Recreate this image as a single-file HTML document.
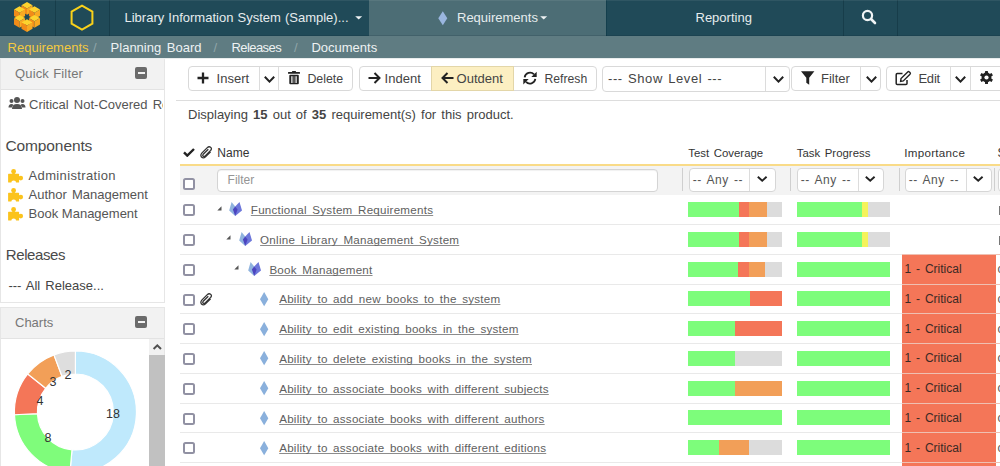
<!DOCTYPE html>
<html><head><meta charset="utf-8">
<style>
*{box-sizing:border-box;margin:0;padding:0}
html,body{width:1000px;height:466px;overflow:hidden;background:#fff;font-family:"Liberation Sans",sans-serif;color:#333}
.a{position:absolute}
.t{position:absolute;white-space:pre;line-height:1}
.vd{position:absolute;top:0;width:1px;height:36px;background:#173d4a}
.cb{position:absolute;width:12px;height:12px;border:2px solid #9191a3;border-radius:2.5px;background:#fff}
.btn{position:absolute;border:1px solid #d9d9d9;border-radius:4px;background:#fff}
.sep{position:absolute;width:1px;background:#d9d9d9}
u{text-decoration:underline;text-decoration-color:#8c8c8c;text-underline-offset:1.2px;text-decoration-skip-ink:none}
</style></head>
<body>

<div class="a" style="left:0;top:0;width:1000px;height:36px;background:#204a58"></div>
<svg class="a" style="left:0;top:0" width="55" height="36"><polygon points="27.00,2.00 32.54,5.20 27.00,8.40 21.46,5.20" fill="#fdd32e"/><polygon points="21.46,5.20 27.00,8.40 27.00,14.80 21.46,11.60" fill="#f28c18"/><polygon points="32.54,5.20 32.54,11.60 27.00,14.80 27.00,8.40" fill="#f8aa22"/><polygon points="19.55,6.30 25.09,9.50 19.55,12.70 14.01,9.50" fill="#fdd32e"/><polygon points="14.01,9.50 19.55,12.70 19.55,19.10 14.01,15.90" fill="#f28c18"/><polygon points="25.09,9.50 25.09,15.90 19.55,19.10 19.55,12.70" fill="#f8aa22"/><polygon points="34.45,6.30 39.99,9.50 34.45,12.70 28.91,9.50" fill="#fdd32e"/><polygon points="28.91,9.50 34.45,12.70 34.45,19.10 28.91,15.90" fill="#f28c18"/><polygon points="39.99,9.50 39.99,15.90 34.45,19.10 34.45,12.70" fill="#f8aa22"/><polygon points="19.55,14.90 25.09,18.10 19.55,21.30 14.01,18.10" fill="#fdd32e"/><polygon points="14.01,18.10 19.55,21.30 19.55,27.70 14.01,24.50" fill="#f28c18"/><polygon points="25.09,18.10 25.09,24.50 19.55,27.70 19.55,21.30" fill="#f8aa22"/><polygon points="34.45,14.90 39.99,18.10 34.45,21.30 28.91,18.10" fill="#fdd32e"/><polygon points="28.91,18.10 34.45,21.30 34.45,27.70 28.91,24.50" fill="#f28c18"/><polygon points="39.99,18.10 39.99,24.50 34.45,27.70 34.45,21.30" fill="#f8aa22"/><polygon points="27.00,19.20 32.54,22.40 27.00,25.60 21.46,22.40" fill="#fdd32e"/><polygon points="21.46,22.40 27.00,25.60 27.00,32.00 21.46,28.80" fill="#f28c18"/><polygon points="32.54,22.40 32.54,28.80 27.00,32.00 27.00,25.60" fill="#f8aa22"/></svg>
<div class="vd" style="left:55px"></div>
<svg class="a" style="left:56px;top:0" width="53" height="36" viewBox="56 0 53 36"><polygon points="82,5.6 92.4,11.6 92.4,23.6 82,29.6 71.6,23.6 71.6,11.6" fill="none" stroke="#f9d11a" stroke-width="2"/></svg>
<div class="vd" style="left:109px"></div>
<div class="t" style="left:124.5px;top:11.00px;font-size:13px;color:#e6ecee;word-spacing:0.5px">Library Information System (Sample)...</div>
<svg class="a" style="left:354.5px;top:15.8px" width="8" height="5"><path d="M0.2 0.2 L7.2 0.2 L3.7 3.6 Z" fill="#eef2f3"/></svg>
<div class="a" style="left:369px;top:0;width:237px;height:36px;background:#4c6d75"></div>
<div class="vd" style="left:606px;background:#143f4d"></div>
<svg class="a" style="left:438px;top:11px" width="10" height="15" viewBox="0 0 10 15"><path d="M4.8 0.2 L9.3 7.2 L4.8 14.2 L0.3 7.2 Z" fill="#9ab6df"/></svg>
<div class="t" style="left:457px;top:11.00px;font-size:13px;color:#e6ecee;">Requirements</div>
<svg class="a" style="left:540.3px;top:15.8px" width="8" height="5"><path d="M0.2 0.2 L7.2 0.2 L3.7 3.6 Z" fill="#eef2f3"/></svg>
<div class="t" style="left:695.5px;top:11.00px;font-size:13px;color:#e6ecee;">Reporting</div>
<div class="vd" style="left:843px"></div>
<svg class="a" style="left:861px;top:9px" width="16" height="16" viewBox="0 0 16 16"><circle cx="6.5" cy="6.5" r="4.6" fill="none" stroke="#f0f4f5" stroke-width="2.2"/><path d="M10 10 L14 14" stroke="#f0f4f5" stroke-width="2.6" stroke-linecap="round"/></svg>
<div class="vd" style="left:897px"></div>
<div class="a" style="left:0;top:0;width:1000px;height:1px;background:rgba(255,255,255,0.07)"></div>
<div class="a" style="left:0;top:35px;width:1000px;height:1px;background:rgba(0,20,30,0.12)"></div>
<div class="a" style="left:0;top:36px;width:1000px;height:21.5px;background:#5f7c82"></div>
<div class="t" style="left:7.6px;top:40.60px;font-size:13px;color:#f3c93f;">Requirements</div>
<div class="t" style="left:93px;top:40.60px;font-size:13px;color:#8fa5a9;">/</div>
<div class="t" style="left:110.6px;top:40.60px;font-size:13px;color:#eef2f3;word-spacing:2px">Planning Board</div>
<div class="t" style="left:213.5px;top:40.60px;font-size:13px;color:#8fa5a9;">/</div>
<div class="t" style="left:231.4px;top:40.60px;font-size:13px;color:#eef2f3;letter-spacing:-0.55px">Releases</div>
<div class="t" style="left:294px;top:40.60px;font-size:13px;color:#8fa5a9;">/</div>
<div class="t" style="left:311.4px;top:40.60px;font-size:13px;color:#eef2f3;">Documents</div>
<div class="a" style="left:0;top:57.5px;width:1000px;height:1.5px;background:#e9eded"></div>
<div class="a" style="left:0;top:59px;width:165px;height:244px;border:1px solid #e6e6e6;border-top:none"></div>
<div class="a" style="left:1px;top:59px;width:163px;height:31px;background:#f2f2f2;border-bottom:1px solid #e3e3e3"></div>
<div class="t" style="left:15px;top:67.00px;font-size:13px;color:#777;letter-spacing:0.15px;word-spacing:0.5px">Quick Filter</div>
<div class="a" style="left:135px;top:67px;width:12px;height:12px;background:#6b6b6b;border-radius:2px"><div class="a" style="left:2.5px;top:5px;width:7px;height:2px;background:#f2f2f2"></div></div>
<svg class="a" style="left:8px;top:96px" width="18" height="14" viewBox="0 0 18 14"><circle cx="9" cy="4" r="3" fill="#555"/><circle cx="3.5" cy="5" r="2" fill="#555"/><circle cx="14.5" cy="5" r="2" fill="#555"/><path d="M4 13 Q4 8 9 8 Q14 8 14 13 Z" fill="#555"/><path d="M0.5 11.5 Q0.5 8 3.5 8 Q5 8 5.5 9 Q4 10 3.8 11.5 Z" fill="#555"/><path d="M17.5 11.5 Q17.5 8 14.5 8 Q13 8 12.5 9 Q14 10 14.2 11.5 Z" fill="#555"/></svg>
<div class="a" style="left:28px;top:94px;width:135px;height:18px;overflow:hidden">
<div class="t" style="left:1px;top:3.70px;font-size:13px;color:#555;word-spacing:1.5px">Critical Not-Covered Requirements</div>
</div>
<div class="t" style="left:5.4px;top:138.25px;font-size:15.5px;color:#4a4a4a;letter-spacing:-0.1px">Components</div>
<svg class="a" style="left:8px;top:168.6px" width="16" height="14" viewBox="0 0 16 14"><rect x="0.1" y="4.8" width="11" height="8.7" rx="0.6" fill="#fbc31c"/><circle cx="5.6" cy="2.5" r="2.4" fill="#fbc31c"/><rect x="4.4" y="3" width="2.4" height="2.5" fill="#fbc31c"/><circle cx="12.8" cy="9.1" r="2.3" fill="#fbc31c"/><circle cx="5.7" cy="13.8" r="2.4" fill="#fff"/></svg>
<div class="t" style="left:28.6px;top:169.00px;font-size:13px;color:#555;letter-spacing:0.35px">Administration</div>
<svg class="a" style="left:8px;top:187.6px" width="16" height="14" viewBox="0 0 16 14"><rect x="0.1" y="4.8" width="11" height="8.7" rx="0.6" fill="#fbc31c"/><circle cx="5.6" cy="2.5" r="2.4" fill="#fbc31c"/><rect x="4.4" y="3" width="2.4" height="2.5" fill="#fbc31c"/><circle cx="12.8" cy="9.1" r="2.3" fill="#fbc31c"/><circle cx="5.7" cy="13.8" r="2.4" fill="#fff"/></svg>
<div class="t" style="left:28.6px;top:188.00px;font-size:13px;color:#555;word-spacing:1.5px">Author Management</div>
<svg class="a" style="left:8px;top:206.6px" width="16" height="14" viewBox="0 0 16 14"><rect x="0.1" y="4.8" width="11" height="8.7" rx="0.6" fill="#fbc31c"/><circle cx="5.6" cy="2.5" r="2.4" fill="#fbc31c"/><rect x="4.4" y="3" width="2.4" height="2.5" fill="#fbc31c"/><circle cx="12.8" cy="9.1" r="2.3" fill="#fbc31c"/><circle cx="5.7" cy="13.8" r="2.4" fill="#fff"/></svg>
<div class="t" style="left:28.6px;top:207.00px;font-size:13px;color:#555;">Book Management</div>
<div class="t" style="left:5.8px;top:247.00px;font-size:15px;color:#4a4a4a;letter-spacing:-0.4px">Releases</div>
<div class="t" style="left:8.4px;top:278.50px;font-size:13px;color:#444;word-spacing:1.5px">--- All Release...</div>
<div class="a" style="left:0;top:306.5px;width:165px;height:170px;border:1px solid #e6e6e6"></div>
<div class="a" style="left:1px;top:308px;width:163px;height:31px;background:#f2f2f2;border-bottom:1px solid #e3e3e3"></div>
<div class="t" style="left:15px;top:316.00px;font-size:13px;color:#777;">Charts</div>
<div class="a" style="left:135px;top:316px;width:12px;height:12px;background:#6b6b6b;border-radius:2px"><div class="a" style="left:2.5px;top:5px;width:7px;height:2px;background:#f2f2f2"></div></div>
<div class="a" style="left:176px;top:100px;width:824px;height:1px;background:#ddd"></div>
<div class="t" style="left:188px;top:107.80px;font-size:13px;color:#444;word-spacing:1.5px">Displaying <b>15</b> out of <b>35</b> requirement(s) for this product.</div>
<div class="btn" style="left:188px;top:66.3px;width:165.3px;height:25.2px;background:#fff"></div>
<div class="sep" style="left:259.4px;top:67px;height:23.5px;background:#dcdcdc"></div>
<div class="sep" style="left:278.3px;top:67px;height:23.5px;background:#dcdcdc"></div>
<svg class="a" style="left:197.4px;top:72px" width="12" height="12"><path d="M6 0.5V11.5M0.5 6H11.5" stroke="#222" stroke-width="2.3"/></svg>
<div class="t" style="left:216.6px;top:71.80px;font-size:13px;color:#444;">Insert</div>
<svg class="a" style="left:262.5px;top:74.6px" width="13" height="8.6"><path d="M1.8 1.8 L6.5 6.6 L11.2 1.8" fill="none" stroke="#222" stroke-width="2"/></svg>
<svg class="a" style="left:288px;top:70px" width="12" height="15" viewBox="0 0 12 15"><rect x="4" y="1" width="4" height="1.6" rx="0.6" fill="#222"/><rect x="0" y="2" width="12" height="1.8" rx="0.5" fill="#222"/><rect x="1.3" y="4.8" width="9.5" height="9.5" rx="1" fill="#222"/><rect x="3.3" y="6.2" width="1.2" height="6.8" fill="#fff"/><rect x="7.5" y="6.2" width="1.2" height="6.8" fill="#fff"/><rect x="5.4" y="6.2" width="1.2" height="6.8" fill="#777"/></svg>
<div class="t" style="left:307.4px;top:72.60px;font-size:12.4px;color:#444;">Delete</div>
<div class="btn" style="left:358.6px;top:66.3px;width:238.4px;height:25.2px;background:#fff"></div>
<div class="a" style="left:431.4px;top:66.3px;width:83px;height:25.2px;background:#fcefc2;border:1px solid #e3d6a8"></div>
<svg class="a" style="left:367.5px;top:72px" width="13" height="12"><path d="M0.5 6H11.5M6.5 1L11.5 6L6.5 11" fill="none" stroke="#222" stroke-width="2"/></svg>
<div class="t" style="left:384.6px;top:71.80px;font-size:13px;color:#444;">Indent</div>
<svg class="a" style="left:440.5px;top:72px" width="13" height="12"><path d="M12.5 6H1.5M6.5 1L1.5 6L6.5 11" fill="none" stroke="#222" stroke-width="2"/></svg>
<div class="t" style="left:456.6px;top:71.80px;font-size:13px;color:#444;">Outdent</div>
<svg class="a" style="left:523px;top:70.8px" width="14" height="14" viewBox="0 0 14 14"><path d="M1.65 6.3A5.5 5.5 0 0 1 11.0 3.3" fill="none" stroke="#222" stroke-width="1.8"/><path d="M13.7 0.7V6.1H8.3Z" fill="#222"/><path d="M12.35 7.9A5.5 5.5 0 0 1 3.0 10.9" fill="none" stroke="#222" stroke-width="1.8"/><path d="M0.3 13.5V8.1H5.7Z" fill="#222"/></svg>
<div class="t" style="left:544.5px;top:72.70px;font-size:12.2px;color:#444;">Refresh</div>
<div class="btn" style="left:602.3px;top:65.8px;width:188px;height:26.2px;border-radius:4px"></div>
<div class="sep" style="left:764.7px;top:67px;height:24px;background:#dcdcdc"></div>
<div class="t" style="left:608px;top:71.80px;font-size:13px;color:#444;letter-spacing:0.6px;word-spacing:1px">--- Show Level ---</div>
<svg class="a" style="left:771.8px;top:74.6px" width="13" height="8.6"><path d="M1.8 1.8 L6.5 6.6 L11.2 1.8" fill="none" stroke="#222" stroke-width="2"/></svg>
<div class="btn" style="left:791.3px;top:66.3px;width:89.3px;height:25.2px;background:#fff"></div>
<div class="sep" style="left:860.4px;top:67px;height:23.5px;background:#dcdcdc"></div>
<svg class="a" style="left:801px;top:71px" width="14" height="14" viewBox="0 0 14 14"><path d="M0 0.2H13.4L8.2 6.8V13.8L5.3 11.8V6.8Z" fill="#222"/></svg>
<div class="t" style="left:821px;top:71.80px;font-size:13px;color:#444;">Filter</div>
<svg class="a" style="left:864.5px;top:74.6px" width="13" height="8.6"><path d="M1.8 1.8 L6.5 6.6 L11.2 1.8" fill="none" stroke="#222" stroke-width="2"/></svg>
<div class="btn" style="left:885.9px;top:66.3px;width:124.1px;height:25.2px;background:#fff"></div>
<div class="sep" style="left:950.4px;top:67px;height:23.5px;background:#dcdcdc"></div>
<div class="sep" style="left:969.5px;top:67px;height:23.5px;background:#dcdcdc"></div>
<svg class="a" style="left:895px;top:69.8px" width="17" height="16" viewBox="0 0 17 16"><path d="M7.5 3.6H2.3Q1.2 3.6 1.2 4.7V13.6Q1.2 14.6 2.3 14.6H10.9Q12 14.6 12 13.6V10" fill="none" stroke="#222" stroke-width="1.5"/><path d="M5.6 11.4L6 8.6L12.7 1.9Q13.5 1.1 14.3 1.9L15 2.6Q15.8 3.4 15 4.2L8.3 10.9Z" fill="none" stroke="#222" stroke-width="1.4"/></svg>
<div class="t" style="left:918.4px;top:71.80px;font-size:13px;color:#444;letter-spacing:-0.2px">Edit</div>
<svg class="a" style="left:953.8px;top:74.6px" width="13" height="8.6"><path d="M1.8 1.8 L6.5 6.6 L11.2 1.8" fill="none" stroke="#222" stroke-width="2"/></svg>
<svg class="a" style="left:978px;top:69.3px" width="17" height="17"><circle cx="8.5" cy="8.5" r="4.9" fill="#222"/><rect x="7" y="1.9" width="3" height="3" rx="0.5" fill="#222" transform="rotate(0 8.5 8.5)"/><rect x="7" y="1.9" width="3" height="3" rx="0.5" fill="#222" transform="rotate(60 8.5 8.5)"/><rect x="7" y="1.9" width="3" height="3" rx="0.5" fill="#222" transform="rotate(120 8.5 8.5)"/><rect x="7" y="1.9" width="3" height="3" rx="0.5" fill="#222" transform="rotate(180 8.5 8.5)"/><rect x="7" y="1.9" width="3" height="3" rx="0.5" fill="#222" transform="rotate(240 8.5 8.5)"/><rect x="7" y="1.9" width="3" height="3" rx="0.5" fill="#222" transform="rotate(300 8.5 8.5)"/><circle cx="8.5" cy="8.5" r="2.1" fill="#fff"/></svg>
<svg class="a" style="left:183px;top:148px" width="12" height="9" viewBox="0 0 12 9"><path d="M1 4.3L4.3 7.6L11 1" fill="none" stroke="#222" stroke-width="2.4"/></svg>
<svg class="a" style="left:200px;top:146px" width="13" height="13" viewBox="0 0 13 13"><path d="M8.3 3.2L3.2 8.3Q2.2 9.5 3.3 10.2Q4.2 10.9 5.2 9.9L10.6 4.5Q12.3 2.6 10.6 1.3Q9 0 7.3 1.6L2 6.9Q0 9 1.5 11Q3.3 12.8 5.5 10.8L10.6 5.7" fill="none" stroke="#333" stroke-width="1.3"/></svg>
<div class="t" style="left:217.3px;top:147.00px;font-size:12px;color:#333;">Name</div>
<div class="t" style="left:688.2px;top:147.70px;font-size:11.4px;color:#333;word-spacing:1.5px">Test Coverage</div>
<div class="t" style="left:796.7px;top:147.70px;font-size:11.4px;color:#333;word-spacing:1.5px">Task Progress</div>
<div class="t" style="left:904.2px;top:147.20px;font-size:11.6px;color:#333;letter-spacing:0.3px">Importance</div>
<div class="t" style="left:997.5px;top:146.50px;font-size:12px;color:#333;">S</div>
<div class="a" style="left:180.3px;top:164px;width:820px;height:2px;background:#f9db88"></div>
<div class="a" style="left:180.3px;top:166px;width:820px;height:28.7px;background:#f3f3f3"></div>
<div class="cb" style="left:183.2px;top:177.6px"></div>
<div class="btn" style="left:217.3px;top:168.5px;width:440.3px;height:23.3px;border-color:#d4d4d4;box-shadow:inset 0 1px 1px rgba(0,0,0,0.06)"></div>
<div class="t" style="left:227.6px;top:174.00px;font-size:12px;color:#959595;">Filter</div>
<div class="sep" style="left:681.6px;top:168px;height:23px;background:#cfcfcf"></div>
<div class="sep" style="left:790.4px;top:168px;height:23px;background:#cfcfcf"></div>
<div class="sep" style="left:899.2px;top:168px;height:23px;background:#cfcfcf"></div>
<div class="sep" style="left:993.6px;top:168px;height:23px;background:#cfcfcf"></div>
<div class="btn" style="left:688.5px;top:167.7px;width:87.2px;height:24px;border-color:#d6d6d6"></div>
<div class="sep" style="left:749.3px;top:168.5px;height:22.5px;background:#dcdcdc"></div>
<div class="t" style="left:692.8px;top:174.30px;font-size:12px;color:#555;word-spacing:1.3px;letter-spacing:0.55px">-- Any --</div>
<svg class="a" style="left:756.0999999999999px;top:175.1px" width="12.4" height="7.8"><path d="M1.8 1.8 L6.2 5.8 L10.6 1.8" fill="none" stroke="#222" stroke-width="1.9"/></svg>
<div class="btn" style="left:796.5px;top:167.7px;width:87.5px;height:24px;border-color:#d6d6d6"></div>
<div class="sep" style="left:857.6px;top:168.5px;height:22.5px;background:#dcdcdc"></div>
<div class="t" style="left:800.8px;top:174.30px;font-size:12px;color:#555;word-spacing:1.3px;letter-spacing:0.55px">-- Any --</div>
<svg class="a" style="left:864.4px;top:175.1px" width="12.4" height="7.8"><path d="M1.8 1.8 L6.2 5.8 L10.6 1.8" fill="none" stroke="#222" stroke-width="1.9"/></svg>
<div class="btn" style="left:904.5px;top:167.7px;width:87.7px;height:24px;border-color:#d6d6d6"></div>
<div class="sep" style="left:965.6px;top:168.5px;height:22.5px;background:#dcdcdc"></div>
<div class="t" style="left:908.8px;top:174.30px;font-size:12px;color:#555;word-spacing:1.3px;letter-spacing:0.55px">-- Any --</div>
<svg class="a" style="left:972.4px;top:175.1px" width="12.4" height="7.8"><path d="M1.8 1.8 L6.2 5.8 L10.6 1.8" fill="none" stroke="#222" stroke-width="1.9"/></svg>
<div class="btn" style="left:998px;top:167.7px;width:20px;height:24px;border-color:#d6d6d6"></div>
<div class="cb" style="left:183.2px;top:204.40px"></div>
<svg class="a" style="left:216.60px;top:205.60px" width="5" height="5"><path d="M4.5 0.3V4.5H0.3Z" fill="#555"/></svg>
<svg class="a" style="left:229.00px;top:202.00px" width="14" height="15" viewBox="0 0 14 15"><path d="M2.6 0L6.2 4.5V14L0.2 8.5Z" fill="#8fb3de"/><path d="M10.5 0L13 8.5L6.2 14V4.5Z" fill="#6d77da"/><path d="M6.2 4.5L8.6 7.6L6.2 14L3.9 7.6Z" fill="#4b44bf"/></svg>
<div class="t" style="left:250.8px;top:204.20px;font-size:11.6px;color:#606060;word-spacing:2.07px;letter-spacing:0.25px"><u>Functional System Requirements</u></div>
<div class="a" style="left:688.00px;top:202.10px;width:51.00px;height:15px;background:#7dfd7b"></div>
<div class="a" style="left:739.00px;top:202.10px;width:9.80px;height:15px;background:#f47658"></div>
<div class="a" style="left:748.80px;top:202.10px;width:18.60px;height:15px;background:#f29f58"></div>
<div class="a" style="left:767.40px;top:202.10px;width:14.30px;height:15px;background:#dcdcdc"></div>
<div class="a" style="left:796.50px;top:202.10px;width:65.50px;height:15px;background:#7dfd7b"></div>
<div class="a" style="left:862.00px;top:202.10px;width:6.00px;height:15px;background:#f5f35a"></div>
<div class="a" style="left:868.00px;top:202.10px;width:22.00px;height:15px;background:#dcdcdc"></div>
<div class="a" style="left:998.6px;top:206.40px;width:1.4px;height:9px;background:#777"></div>
<div class="cb" style="left:183.2px;top:234.16px"></div>
<svg class="a" style="left:225.50px;top:235.36px" width="5" height="5"><path d="M4.5 0.3V4.5H0.3Z" fill="#555"/></svg>
<svg class="a" style="left:238.60px;top:231.76px" width="14" height="15" viewBox="0 0 14 15"><path d="M2.6 0L6.2 4.5V14L0.2 8.5Z" fill="#8fb3de"/><path d="M10.5 0L13 8.5L6.2 14V4.5Z" fill="#6d77da"/><path d="M6.2 4.5L8.6 7.6L6.2 14L3.9 7.6Z" fill="#4b44bf"/></svg>
<div class="t" style="left:260.1px;top:233.96px;font-size:11.6px;color:#606060;word-spacing:2.07px;letter-spacing:0.25px"><u>Online Library Management System</u></div>
<div class="a" style="left:688.00px;top:231.86px;width:51.00px;height:15px;background:#7dfd7b"></div>
<div class="a" style="left:739.00px;top:231.86px;width:9.80px;height:15px;background:#f47658"></div>
<div class="a" style="left:748.80px;top:231.86px;width:18.60px;height:15px;background:#f29f58"></div>
<div class="a" style="left:767.40px;top:231.86px;width:14.30px;height:15px;background:#dcdcdc"></div>
<div class="a" style="left:796.50px;top:231.86px;width:65.50px;height:15px;background:#7dfd7b"></div>
<div class="a" style="left:862.00px;top:231.86px;width:6.00px;height:15px;background:#f5f35a"></div>
<div class="a" style="left:868.00px;top:231.86px;width:22.00px;height:15px;background:#dcdcdc"></div>
<div class="a" style="left:998.6px;top:236.16px;width:1.4px;height:9px;background:#777"></div>
<div class="cb" style="left:183.2px;top:263.92px"></div>
<svg class="a" style="left:234.40px;top:265.12px" width="5" height="5"><path d="M4.5 0.3V4.5H0.3Z" fill="#555"/></svg>
<svg class="a" style="left:248.20px;top:261.52px" width="14" height="15" viewBox="0 0 14 15"><path d="M2.6 0L6.2 4.5V14L0.2 8.5Z" fill="#8fb3de"/><path d="M10.5 0L13 8.5L6.2 14V4.5Z" fill="#6d77da"/><path d="M6.2 4.5L8.6 7.6L6.2 14L3.9 7.6Z" fill="#4b44bf"/></svg>
<div class="t" style="left:269.40000000000003px;top:263.72px;font-size:11.6px;color:#606060;word-spacing:2.07px;letter-spacing:0.25px"><u>Book Management</u></div>
<div class="a" style="left:688.00px;top:261.62px;width:49.50px;height:15px;background:#7dfd7b"></div>
<div class="a" style="left:737.50px;top:261.62px;width:11.30px;height:15px;background:#f47658"></div>
<div class="a" style="left:748.80px;top:261.62px;width:16.20px;height:15px;background:#f29f58"></div>
<div class="a" style="left:765.00px;top:261.62px;width:16.70px;height:15px;background:#dcdcdc"></div>
<div class="a" style="left:796.50px;top:261.62px;width:93.50px;height:15px;background:#7dfd7b"></div>
<div class="a" style="left:902px;top:253.72px;width:94.2px;height:30.26px;background:#f47658"></div>
<div class="t" style="left:904.6px;top:263.02px;font-size:12px;color:#3a2a25;word-spacing:1.5px">1 - Critical</div>
<div class="t" style="left:997.6px;top:263.02px;font-size:12px;color:#555;">c</div>
<div class="cb" style="left:183.2px;top:293.68px"></div>
<svg class="a" style="left:200px;top:293.18px" width="13" height="13" viewBox="0 0 13 13"><path d="M8.3 3.2L3.2 8.3Q2.2 9.5 3.3 10.2Q4.2 10.9 5.2 9.9L10.6 4.5Q12.3 2.6 10.6 1.3Q9 0 7.3 1.6L2 6.9Q0 9 1.5 11Q3.3 12.8 5.5 10.8L10.6 5.7" fill="none" stroke="#333" stroke-width="1.3"/></svg>
<svg class="a" style="left:259.9px;top:291.88px" width="9" height="15" viewBox="0 0 9 15"><path d="M4.15 0L8.3 7.2L4.15 14.3L0 7.2Z" fill="#8ab0dc"/></svg>
<div class="t" style="left:279.2px;top:293.48px;font-size:11.6px;color:#606060;word-spacing:2.07px;letter-spacing:0.25px"><u>Ability to add new books to the system</u></div>
<div class="a" style="left:688.00px;top:291.38px;width:62.00px;height:15px;background:#7dfd7b"></div>
<div class="a" style="left:750.00px;top:291.38px;width:31.70px;height:15px;background:#f47658"></div>
<div class="a" style="left:796.50px;top:291.38px;width:93.50px;height:15px;background:#7dfd7b"></div>
<div class="a" style="left:902px;top:283.48px;width:94.2px;height:30.26px;background:#f47658"></div>
<div class="t" style="left:904.6px;top:292.78px;font-size:12px;color:#3a2a25;word-spacing:1.5px">1 - Critical</div>
<div class="t" style="left:997.6px;top:292.78px;font-size:12px;color:#555;">c</div>
<div class="cb" style="left:183.2px;top:323.44px"></div>
<svg class="a" style="left:259.9px;top:321.64px" width="9" height="15" viewBox="0 0 9 15"><path d="M4.15 0L8.3 7.2L4.15 14.3L0 7.2Z" fill="#8ab0dc"/></svg>
<div class="t" style="left:279.2px;top:323.24px;font-size:11.6px;color:#606060;word-spacing:2.07px;letter-spacing:0.25px"><u>Ability to edit existing books in the system</u></div>
<div class="a" style="left:688.00px;top:321.14px;width:46.50px;height:15px;background:#7dfd7b"></div>
<div class="a" style="left:734.50px;top:321.14px;width:47.20px;height:15px;background:#f47658"></div>
<div class="a" style="left:796.50px;top:321.14px;width:93.50px;height:15px;background:#7dfd7b"></div>
<div class="a" style="left:902px;top:313.24px;width:94.2px;height:30.26px;background:#f47658"></div>
<div class="t" style="left:904.6px;top:322.54px;font-size:12px;color:#3a2a25;word-spacing:1.5px">1 - Critical</div>
<div class="t" style="left:997.6px;top:322.54px;font-size:12px;color:#555;">c</div>
<div class="cb" style="left:183.2px;top:353.20px"></div>
<svg class="a" style="left:259.9px;top:351.40px" width="9" height="15" viewBox="0 0 9 15"><path d="M4.15 0L8.3 7.2L4.15 14.3L0 7.2Z" fill="#8ab0dc"/></svg>
<div class="t" style="left:279.2px;top:353.00px;font-size:11.6px;color:#606060;word-spacing:2.07px;letter-spacing:0.25px"><u>Ability to delete existing books in the system</u></div>
<div class="a" style="left:688.00px;top:350.90px;width:46.50px;height:15px;background:#7dfd7b"></div>
<div class="a" style="left:734.50px;top:350.90px;width:47.20px;height:15px;background:#dcdcdc"></div>
<div class="a" style="left:796.50px;top:350.90px;width:93.50px;height:15px;background:#7dfd7b"></div>
<div class="a" style="left:902px;top:343.00px;width:94.2px;height:30.26px;background:#f47658"></div>
<div class="t" style="left:904.6px;top:352.30px;font-size:12px;color:#3a2a25;word-spacing:1.5px">1 - Critical</div>
<div class="t" style="left:997.6px;top:352.30px;font-size:12px;color:#555;">c</div>
<div class="cb" style="left:183.2px;top:382.96px"></div>
<svg class="a" style="left:259.9px;top:381.16px" width="9" height="15" viewBox="0 0 9 15"><path d="M4.15 0L8.3 7.2L4.15 14.3L0 7.2Z" fill="#8ab0dc"/></svg>
<div class="t" style="left:279.2px;top:382.76px;font-size:11.6px;color:#606060;word-spacing:2.07px;letter-spacing:0.25px"><u>Ability to associate books with different subjects</u></div>
<div class="a" style="left:688.00px;top:380.66px;width:46.60px;height:15px;background:#7dfd7b"></div>
<div class="a" style="left:734.60px;top:380.66px;width:47.10px;height:15px;background:#f29f58"></div>
<div class="a" style="left:796.50px;top:380.66px;width:93.50px;height:15px;background:#7dfd7b"></div>
<div class="a" style="left:902px;top:372.76px;width:94.2px;height:30.26px;background:#f47658"></div>
<div class="t" style="left:904.6px;top:382.06px;font-size:12px;color:#3a2a25;word-spacing:1.5px">1 - Critical</div>
<div class="t" style="left:997.6px;top:382.06px;font-size:12px;color:#555;">c</div>
<div class="cb" style="left:183.2px;top:412.72px"></div>
<svg class="a" style="left:259.9px;top:410.92px" width="9" height="15" viewBox="0 0 9 15"><path d="M4.15 0L8.3 7.2L4.15 14.3L0 7.2Z" fill="#8ab0dc"/></svg>
<div class="t" style="left:279.2px;top:412.52px;font-size:11.6px;color:#606060;word-spacing:2.07px;letter-spacing:0.25px"><u>Ability to associate books with different authors</u></div>
<div class="a" style="left:688.00px;top:410.42px;width:93.70px;height:15px;background:#7dfd7b"></div>
<div class="a" style="left:796.50px;top:410.42px;width:93.50px;height:15px;background:#7dfd7b"></div>
<div class="a" style="left:902px;top:402.52px;width:94.2px;height:30.26px;background:#f47658"></div>
<div class="t" style="left:904.6px;top:411.82px;font-size:12px;color:#3a2a25;word-spacing:1.5px">1 - Critical</div>
<div class="t" style="left:997.6px;top:411.82px;font-size:12px;color:#555;">c</div>
<div class="cb" style="left:183.2px;top:442.48px"></div>
<svg class="a" style="left:259.9px;top:440.68px" width="9" height="15" viewBox="0 0 9 15"><path d="M4.15 0L8.3 7.2L4.15 14.3L0 7.2Z" fill="#8ab0dc"/></svg>
<div class="t" style="left:279.2px;top:442.28px;font-size:11.6px;color:#606060;word-spacing:2.07px;letter-spacing:0.25px"><u>Ability to associate books with different editions</u></div>
<div class="a" style="left:688.00px;top:440.18px;width:30.90px;height:15px;background:#7dfd7b"></div>
<div class="a" style="left:718.90px;top:440.18px;width:30.50px;height:15px;background:#f29f58"></div>
<div class="a" style="left:749.40px;top:440.18px;width:32.30px;height:15px;background:#dcdcdc"></div>
<div class="a" style="left:796.50px;top:440.18px;width:93.50px;height:15px;background:#7dfd7b"></div>
<div class="a" style="left:902px;top:432.28px;width:94.2px;height:30.26px;background:#f47658"></div>
<div class="t" style="left:904.6px;top:441.58px;font-size:12px;color:#3a2a25;word-spacing:1.5px">1 - Critical</div>
<div class="t" style="left:997.6px;top:441.58px;font-size:12px;color:#555;">c</div>
<div class="a" style="left:180.3px;top:224px;width:721.7px;height:1px;background:#e9e9e9"></div>
<div class="a" style="left:902px;top:224px;width:98px;height:1px;background:#e9e9e9"></div>
<div class="a" style="left:180.3px;top:254px;width:721.7px;height:1px;background:#e9e9e9"></div>
<div class="a" style="left:902px;top:254px;width:98px;height:1px;background:#efc0b2"></div>
<div class="a" style="left:180.3px;top:284px;width:721.7px;height:1px;background:#e9e9e9"></div>
<div class="a" style="left:902px;top:284px;width:98px;height:1px;background:#efc0b2"></div>
<div class="a" style="left:180.3px;top:313px;width:721.7px;height:1px;background:#e9e9e9"></div>
<div class="a" style="left:902px;top:313px;width:98px;height:1px;background:#efc0b2"></div>
<div class="a" style="left:180.3px;top:343px;width:721.7px;height:1px;background:#e9e9e9"></div>
<div class="a" style="left:902px;top:343px;width:98px;height:1px;background:#efc0b2"></div>
<div class="a" style="left:180.3px;top:373px;width:721.7px;height:1px;background:#e9e9e9"></div>
<div class="a" style="left:902px;top:373px;width:98px;height:1px;background:#efc0b2"></div>
<div class="a" style="left:180.3px;top:403px;width:721.7px;height:1px;background:#e9e9e9"></div>
<div class="a" style="left:902px;top:403px;width:98px;height:1px;background:#efc0b2"></div>
<div class="a" style="left:180.3px;top:432px;width:721.7px;height:1px;background:#e9e9e9"></div>
<div class="a" style="left:902px;top:432px;width:98px;height:1px;background:#efc0b2"></div>
<div class="a" style="left:180.3px;top:462px;width:721.7px;height:1px;background:#e9e9e9"></div>
<div class="a" style="left:902px;top:462px;width:98px;height:1px;background:#efc0b2"></div>
<div class="a" style="left:902px;top:463px;width:94.2px;height:3px;background:#f47658"></div>
<div class="a" style="left:1px;top:339px;width:148px;height:127px;overflow:hidden"><svg class="a" style="left:-1px;top:-339px" width="150" height="466"><path d="M75.40 351.00A61 61 0 1 1 69.93 472.75L71.99 449.85A38 38 0 1 0 75.40 374.00Z" fill="#bfe9fc" stroke="#fff" stroke-width="1.2"/><path d="M69.93 472.75A61 61 0 0 1 14.46 414.74L37.44 413.70A38 38 0 0 0 71.99 449.85Z" fill="#7ffc7b" stroke="#fff" stroke-width="1.2"/><path d="M14.46 414.74A61 61 0 0 1 27.71 373.97L45.69 388.31A38 38 0 0 0 37.44 413.70Z" fill="#f47658" stroke="#fff" stroke-width="1.2"/><path d="M27.71 373.97A61 61 0 0 1 53.97 354.89L62.05 376.42A38 38 0 0 0 45.69 388.31Z" fill="#f29f58" stroke="#fff" stroke-width="1.2"/><path d="M53.97 354.89A61 61 0 0 1 75.40 351.00L75.40 374.00A38 38 0 0 0 62.05 376.42Z" fill="#dedede" stroke="#fff" stroke-width="1.2"/></svg></div>
<div class="t" style="left:106px;top:407.75px;font-size:12.5px;color:#333;">18</div>
<div class="t" style="left:44.5px;top:431.75px;font-size:12.5px;color:#333;">8</div>
<div class="t" style="left:36.5px;top:394.75px;font-size:12.5px;color:#333;">4</div>
<div class="t" style="left:49.5px;top:375.75px;font-size:12.5px;color:#333;">3</div>
<div class="t" style="left:64.5px;top:368.75px;font-size:12.5px;color:#333;">2</div>
<div class="a" style="left:149px;top:339px;width:15px;height:127px;background:#f1f1f1"></div>
<div class="a" style="left:149px;top:355.3px;width:15.6px;height:111px;background:#c1c1c1"></div>
<svg class="a" style="left:151.5px;top:343px" width="11" height="8"><path d="M1.6 6L5.3 2.3L9 6" fill="none" stroke="#505050" stroke-width="2"/></svg>
</body></html>
